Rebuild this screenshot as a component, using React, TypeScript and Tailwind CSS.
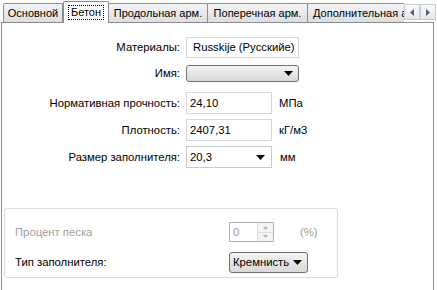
import React from "react";

const font = { fontFamily: '"Liberation Sans", Arial, sans-serif' };

function Tab({ label, w, selected }: { label: string; w: number; selected?: boolean }) {
  if (selected) {
    return (
      <div
        className="relative z-10 -mb-px flex h-[22px] items-center justify-center rounded-t-[2px] border border-b-0 border-[#898c95] bg-white"
        style={{ width: w }}
      >
        <span className="border border-dotted border-black px-[2px] leading-[13px]">{label}</span>
      </div>
    );
  }
  return (
    <div
      className="-ml-px flex h-[19px] items-center justify-center rounded-t-[2px] border border-b-0 border-[#898c95] bg-gradient-to-b from-[#f5f5f5] to-[#dedede] whitespace-nowrap overflow-hidden"
      style={{ width: w }}
    >
      {label}
    </div>
  );
}

function Arrow({ dir }: { dir: "l" | "r" }) {
  return (
    <div className="flex h-[16px] w-[16px] items-center justify-center border border-[#c8ccd4] bg-gradient-to-b from-[#fafafa] to-[#e8e8e8]">
      <svg width="4" height="7" viewBox="0 0 4 7">
        {dir === "l" ? <path d="M4 0 L0 3.5 L4 7 Z" fill="#4d6185" /> : <path d="M0 0 L4 3.5 L0 7 Z" fill="#4d6185" />}
      </svg>
    </div>
  );
}

function Caret() {
  return (
    <svg width="9" height="5" viewBox="0 0 9 5">
      <path d="M0 0 H9 L4.5 5 Z" fill="#000" />
    </svg>
  );
}

function Label({ children }: { children: React.ReactNode }) {
  return <div className="w-[183px] shrink-0 pr-[5px] text-right whitespace-nowrap">{children}</div>;
}

export default function App() {
  return (
    <div className="flex h-[290px] w-[437px] flex-col bg-white text-[11.3px] text-black" style={font}>
      <div className="flex h-[22px] items-end pl-[3px] pr-[2px] text-[11px]">
        <div className="flex items-end">
          <div className="ml-px">
            <Tab label="Основной" w={60} />
          </div>
          <Tab label="Бетон" w={46} selected />
          <Tab label="Продольная арм." w={100} />
          <Tab label="Поперечная арм." w={101} />
          <div
            className="-ml-px flex h-[19px] w-[97px] items-center overflow-hidden rounded-tl-[2px] border border-b-0 border-r-0 border-[#898c95] bg-gradient-to-b from-[#f5f5f5] to-[#dedede] pl-[5px] whitespace-nowrap"
          >
            Дополнительная а
          </div>
        </div>
        <div className="mb-[2px] flex">
          <Arrow dir="l" />
          <Arrow dir="r" />
        </div>
      </div>
      <div className="mx-[1px] mr-[3px] flex flex-1 flex-col border border-b-0 border-[#898c95] pt-[14px]">
        <div className="flex flex-col">
          <div className="flex h-[21px] items-center">
            <Label>Материалы:</Label>
            <div className="ml-[1px] flex h-[21px] w-[113px] items-center whitespace-nowrap border border-[#d5d8de] pl-[6px]">
              Russkije (Русскийе)
            </div>
          </div>
          <div className="mt-[7px] flex h-[17px] items-center">
            <Label>Имя:</Label>
            <div className="ml-[1px] flex h-[17px] w-[113px] items-center justify-end rounded-[3px] border border-[#707070] bg-gradient-to-b from-[#f3f3f3] to-[#d9d9d9] pr-[5px]">
              <Caret />
            </div>
          </div>
          <div className="mt-[10px] flex h-[22px] items-center">
            <Label>Нормативная прочность:</Label>
            <div className="ml-[1px] flex h-[22px] w-[86px] items-center border border-[#d5d8de] pl-[3px]">24,10</div>
            <div className="ml-[7px]">МПа</div>
          </div>
          <div className="mt-[5px] flex h-[22px] items-center">
            <Label>Плотность:</Label>
            <div className="ml-[1px] flex h-[22px] w-[86px] items-center border border-[#d5d8de] pl-[3px]">2407,31</div>
            <div className="ml-[7px]">кГ/м3</div>
          </div>
          <div className="mt-[5px] flex h-[22px] items-center">
            <Label>Размер заполнителя:</Label>
            <div className="ml-[1px] flex h-[22px] w-[86px] items-center justify-between border border-[#c5c9d0] pl-[3px] pr-[6px]">
              <span>20,3</span>
              <Caret />
            </div>
            <div className="ml-[8px]">мм</div>
          </div>
        </div>
        <div className="mt-[40px] ml-[2px] flex h-[70px] w-[334px] flex-col rounded-[3px] border border-[#d5dfe5] pl-[10px]">
          <div className="mt-[13px] flex h-[20px] items-center">
            <div className="w-[214px] text-[#a0a0a0]">Процент песка</div>
            <div className="flex h-[20px] w-[45px] border border-[#adb2b5]">
              <div className="flex flex-1 items-center pl-[3px] text-[#a0a0a0]">0</div>
              <div className="flex w-[16px] flex-col border-l border-[#d9d9d9]">
                <div className="flex flex-1 items-center justify-center border-b border-[#d9d9d9] bg-[#f4f4f4]">
                  <svg width="5" height="3" viewBox="0 0 5 3"><path d="M0 3 L2.5 0 L5 3 Z" fill="#b0b0b0" /></svg>
                </div>
                <div className="flex flex-1 items-center justify-center bg-[#f4f4f4]">
                  <svg width="5" height="3" viewBox="0 0 5 3"><path d="M0 0 L5 0 L2.5 3 Z" fill="#b0b0b0" /></svg>
                </div>
              </div>
            </div>
            <div className="ml-[26px] text-[#a0a0a0]">(%)</div>
          </div>
          <div className="mt-[10px] flex h-[21px] items-center">
            <div className="w-[214px]">Тип заполнителя:</div>
            <div className="flex h-[21px] w-[79px] items-center justify-between whitespace-nowrap rounded-[3px] border border-[#707070] bg-gradient-to-b from-[#f3f3f3] to-[#d9d9d9] pl-[3px] pr-[5px]">
              <span>Кремнисть</span>
              <Caret />
            </div>
          </div>
        </div>
      </div>
    </div>
  );
}
